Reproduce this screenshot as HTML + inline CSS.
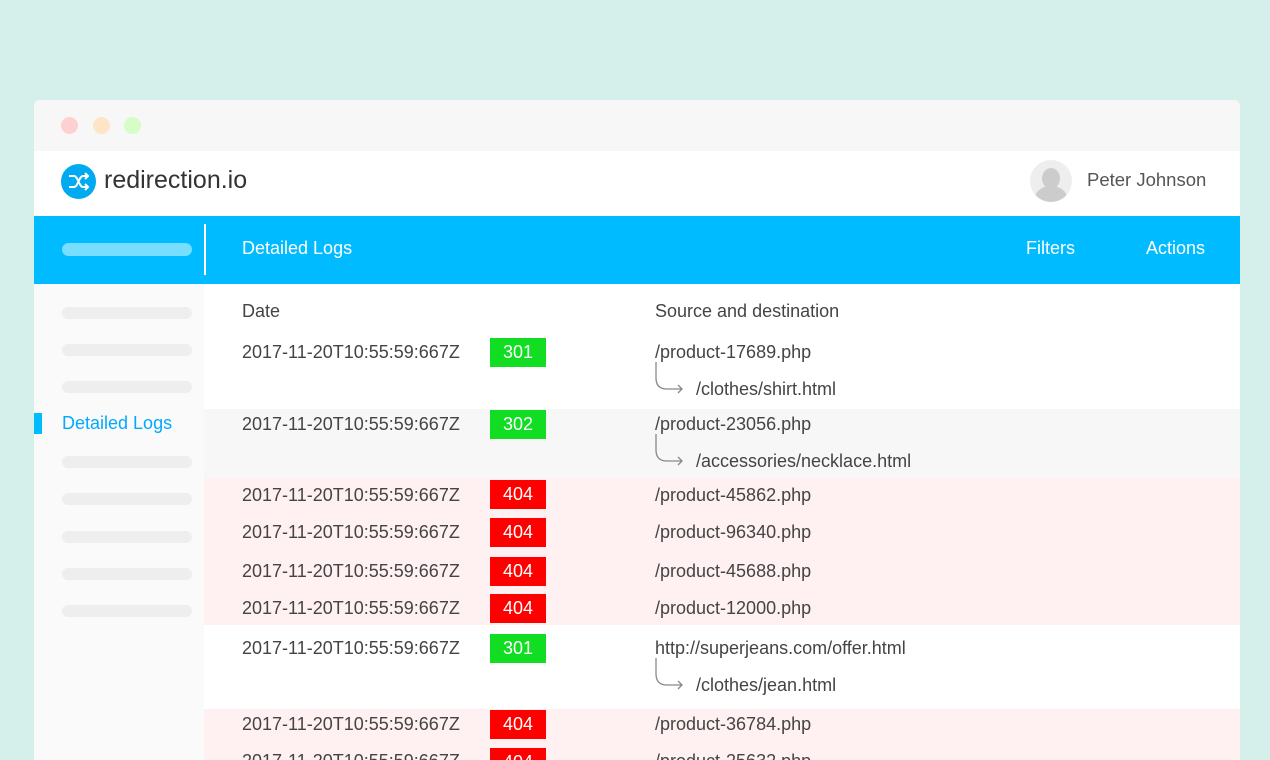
<!DOCTYPE html>
<html><head><style>
*{margin:0;padding:0;box-sizing:border-box}
html,body{width:1270px;height:760px;overflow:hidden}
body{background:#d5f0eb;font-family:"Liberation Sans",sans-serif;color:#444;position:relative}
.a{position:absolute}
.win{left:34px;top:100px;width:1206px;height:660px;background:#fff;border-radius:6px 6px 0 0;overflow:hidden}
.t{font-size:18px;line-height:20px;white-space:nowrap}
.pill{position:absolute;left:62px;width:130px;height:12px;border-radius:6px;background:#eeeeee}
.b{position:absolute;left:490px;width:56px;height:29px;color:#fff;font-size:18px;line-height:29px;text-align:center}
.g{background:#11dd22}.r{background:#ff0000}
</style></head><body>
<div class="a win">
 <div class="a" style="left:0;top:0;width:1206px;height:51px;background:#f7f7f7"></div>
 <div class="a" style="left:27px;top:17px;width:17px;height:17px;border-radius:50%;background:#ffd0d0"></div>
 <div class="a" style="left:59px;top:17px;width:17px;height:17px;border-radius:50%;background:#ffe5c8"></div>
 <div class="a" style="left:90px;top:17px;width:17px;height:17px;border-radius:50%;background:#d6fcc8"></div>
 <svg class="a" style="left:27px;top:64px" width="35" height="35" viewBox="0 0 35 35"><circle cx="17.5" cy="17.5" r="17.5" fill="#00aaf0"/><path d="M8 12h5c4 0 5 11 9 11h5M8 23h5c4 0 5-11 9-11h5M24 9l3 3-3 3M24 20l3 3-3 3" stroke="#fff" stroke-width="2" fill="none"/></svg>
 <div class="a" style="left:70px;top:66px;font-size:25px;color:#333;font-weight:300">redirection.io</div>
 <div class="a" style="left:996px;top:60px;width:42px;height:42px;border-radius:50%;background:#eee;overflow:hidden"><div class="a" style="left:12px;top:8px;width:18px;height:21px;border-radius:50%;background:#ccc"></div><div class="a" style="left:5px;top:26px;width:32px;height:24px;border-radius:50%;background:#ccc"></div></div>
 <div class="a t" style="left:1053px;top:70px;color:#555;font-size:18.5px">Peter Johnson</div>
 <div class="a" style="left:0;top:116px;width:1206px;height:68px;background:#00bbff"></div>
 <div class="a" style="left:28px;top:143px;width:130px;height:13px;border-radius:7px;background:#77deff"></div>
 <div class="a" style="left:170px;top:124px;width:2px;height:51px;background:#fff"></div>
 <div class="a t" style="left:208px;top:138px;color:#fff">Detailed Logs</div>
 <div class="a t" style="left:992px;top:138px;color:#fff">Filters</div>
 <div class="a t" style="left:1112px;top:138px;color:#fff">Actions</div>
 <div class="a" style="left:0;top:184px;width:170px;height:520px;background:#fafafa"></div>
</div>
<div class="pill" style="top:307px"></div><div class="pill" style="top:344px"></div><div class="pill" style="top:381px"></div>
<div class="a" style="left:34px;top:413px;width:8px;height:21px;background:#00bbff"></div>
<div class="a t" style="left:62px;top:413px;color:#00aaff">Detailed Logs</div>
<div class="pill" style="top:456px"></div><div class="pill" style="top:493px"></div><div class="pill" style="top:531px"></div><div class="pill" style="top:568px"></div><div class="pill" style="top:605px"></div>

<div class="a" style="left:204px;top:409px;width:1036px;height:69px;background:#f7f7f7"></div>
<div class="a" style="left:204px;top:478px;width:1036px;height:147px;background:#fff0f2"></div>
<div class="a" style="left:204px;top:709px;width:1036px;height:51px;background:#fff0f2"></div>

<div class="a t" style="left:242px;top:301px">Date</div>
<div class="a t" style="left:655px;top:301px">Source and destination</div>

<div class="a t" style="left:242px;top:342px">2017-11-20T10:55:59:667Z</div><div class="b g" style="top:338px">301</div><div class="a t" style="left:655px;top:342px">/product-17689.php</div><div class="a t" style="left:696px;top:379px">/clothes/shirt.html</div>
<div class="a t" style="left:242px;top:414px">2017-11-20T10:55:59:667Z</div><div class="b g" style="top:410px">302</div><div class="a t" style="left:655px;top:414px">/product-23056.php</div><div class="a t" style="left:696px;top:451px">/accessories/necklace.html</div>
<div class="a t" style="left:242px;top:485px">2017-11-20T10:55:59:667Z</div><div class="b r" style="top:480px">404</div><div class="a t" style="left:655px;top:485px">/product-45862.php</div>
<div class="a t" style="left:242px;top:522px">2017-11-20T10:55:59:667Z</div><div class="b r" style="top:518px">404</div><div class="a t" style="left:655px;top:522px">/product-96340.php</div>
<div class="a t" style="left:242px;top:561px">2017-11-20T10:55:59:667Z</div><div class="b r" style="top:557px">404</div><div class="a t" style="left:655px;top:561px">/product-45688.php</div>
<div class="a t" style="left:242px;top:598px">2017-11-20T10:55:59:667Z</div><div class="b r" style="top:594px">404</div><div class="a t" style="left:655px;top:598px">/product-12000.php</div>
<div class="a t" style="left:242px;top:638px">2017-11-20T10:55:59:667Z</div><div class="b g" style="top:634px">301</div><div class="a t" style="left:655px;top:638px">http://superjeans.com/offer.html</div><div class="a t" style="left:696px;top:675px">/clothes/jean.html</div>
<div class="a t" style="left:242px;top:714px">2017-11-20T10:55:59:667Z</div><div class="b r" style="top:710px">404</div><div class="a t" style="left:655px;top:714px">/product-36784.php</div>
<div class="a t" style="left:242px;top:751px">2017-11-20T10:55:59:667Z</div><div class="b r" style="top:748px">404</div><div class="a t" style="left:655px;top:751px">/product-25632.php</div>

<svg class="a" style="left:650px;top:360px" width="36" height="36"><path d="M6 2v16q0 11 11 11h15M28 25l4 4-4 4" stroke="#888" stroke-width="1.3" fill="none"/></svg>
<svg class="a" style="left:650px;top:432px" width="36" height="36"><path d="M6 2v16q0 11 11 11h15M28 25l4 4-4 4" stroke="#888" stroke-width="1.3" fill="none"/></svg>
<svg class="a" style="left:650px;top:656px" width="36" height="36"><path d="M6 2v16q0 11 11 11h15M28 25l4 4-4 4" stroke="#888" stroke-width="1.3" fill="none"/></svg>
</body></html>
